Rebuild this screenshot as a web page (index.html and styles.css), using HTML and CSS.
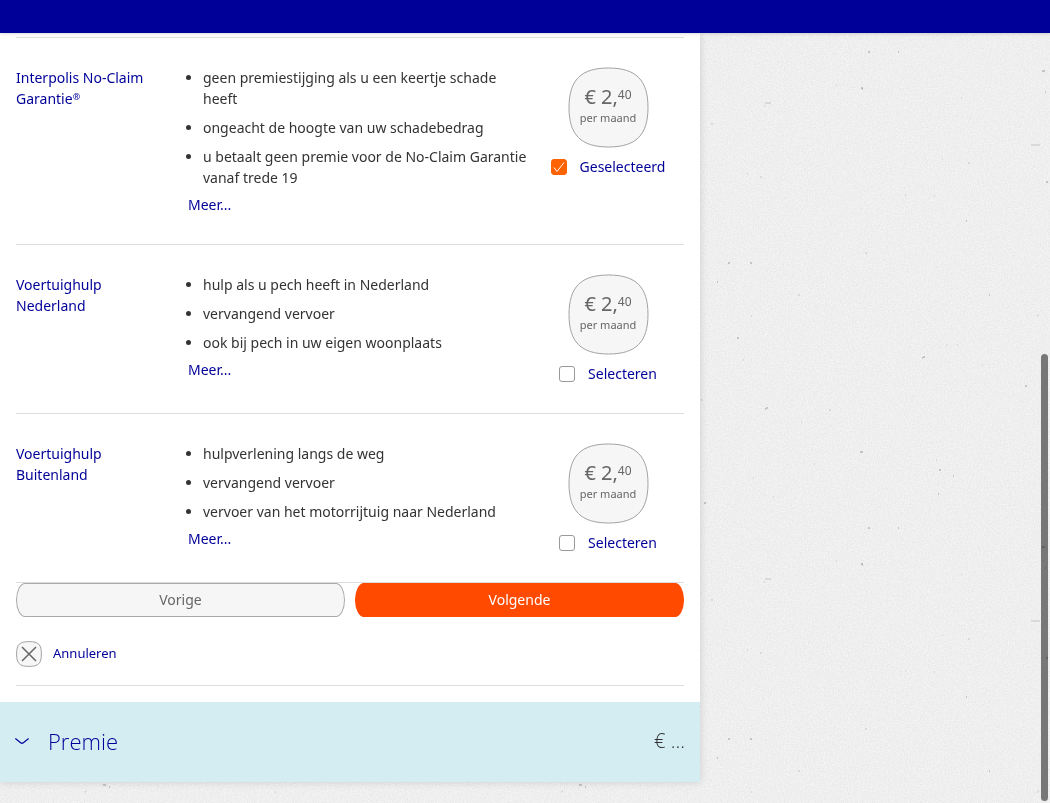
FILE: index.html
```html
<!DOCTYPE html>
<html lang="nl">
<head>
<meta charset="utf-8">
<title>Aanvullende dekkingen</title>
<link rel="stylesheet" href="styles.css">
</head>
<body>
<svg class="defs" aria-hidden="true">
  <symbol id="bubble" viewBox="0 0 81 81">
    <path d="M40.500 1C68 1 80 13 80 40.500S68 80 40.500 80 1 68 1 40.500 13 1 40.500 1Z"/>
  </symbol>
</svg>
<svg class="paper" aria-hidden="true">
  <defs>
    <filter id="grain" x="0" y="0" width="100%" height="100%" color-interpolation-filters="sRGB">
      <feTurbulence type="fractalNoise" baseFrequency="0.7" numOctaves="2" seed="4"/>
      <feColorMatrix values=".09 0 0 0 .891  .09 0 0 0 .891  .09 0 0 0 .891  0 0 0 0 1"/>
    </filter>
    <pattern id="specks" x="700" y="33" width="476" height="476" patternUnits="userSpaceOnUse">
      <path class="speck-dark" d="M168 19h2M198 19h1M161 55h2M162 56h1M342 38h3M345 59h1M346 149h2M266 188h1M223 324h2M222 325h1M325 353h2M1 367h1M66 375h2M65 376h1M160 419h3M239 437h2M253 443h1M238 461h1M4 470h2M28 230h2M50 230h2M17 249h1M37 305h2M289 262h1M355 276h3M361 278h1"/>
      <path class="speck-light" d="M65 70h6M64 73h1M136 52h1M261 65h1M11 91h2M331 112h9M242 126h1M268 130h2M47 141h1M60 144h2M205 162h1M234 163h1M165 220h2M51 283h1M43 327h1M246 312h1M257 312h1M282 332h1M101 389h1M129 377h2M114 431h1M236 427h1M53 445h1M73 464h1M98 262h2M337 283h1M338 282h1"/>
    </pattern>
  </defs>
  <rect width="100%" height="100%" filter="url(#grain)"/>
  <rect width="100%" height="100%" fill="url(#specks)"/>
</svg>
<header class="topbar"></header>
<main class="panel">
  <form class="content">
    <section class="option">
      <h2 class="option-title">Interpolis No-Claim <span class="marked"><span>Garantie</span><span class="mark">®</span></span></h2>
      <div class="option-info">
        <ul class="benefits">
          <li>geen premiestijging als u een keertje schade heeft</li>
          <li>ongeacht de hoogte van uw schadebedrag</li>
          <li>u betaalt geen premie voor de No-Claim Garantie vanaf trede 19</li>
        </ul>
        <a class="more" href="#">Meer...</a>
      </div>
      <div class="option-choice">
        <div class="price">
          <svg class="price-shape" aria-hidden="true"><use href="#bubble"/></svg>
          <p class="price-text"><span class="amount">€ 2,<span class="cents">40</span></span><span class="period">per maand</span></p>
        </div>
        <label class="choice"><input class="check" type="checkbox" checked>Geselecteerd</label>
      </div>
    </section>
    <section class="option">
      <h2 class="option-title">Voertuighulp Nederland</h2>
      <div class="option-info">
        <ul class="benefits">
          <li>hulp als u pech heeft in Nederland</li>
          <li>vervangend vervoer</li>
          <li>ook bij pech in uw eigen woonplaats</li>
        </ul>
        <a class="more" href="#">Meer...</a>
      </div>
      <div class="option-choice">
        <div class="price">
          <svg class="price-shape" aria-hidden="true"><use href="#bubble"/></svg>
          <p class="price-text"><span class="amount">€ 2,<span class="cents">40</span></span><span class="period">per maand</span></p>
        </div>
        <label class="choice"><input class="check" type="checkbox">Selecteren</label>
      </div>
    </section>
    <section class="option">
      <h2 class="option-title">Voertuighulp Buitenland</h2>
      <div class="option-info">
        <ul class="benefits">
          <li>hulpverlening langs de weg</li>
          <li>vervangend vervoer</li>
          <li>vervoer van het motorrijtuig naar Nederland</li>
        </ul>
        <a class="more" href="#">Meer...</a>
      </div>
      <div class="option-choice">
        <div class="price">
          <svg class="price-shape" aria-hidden="true"><use href="#bubble"/></svg>
          <p class="price-text"><span class="amount">€ 2,<span class="cents">40</span></span><span class="period">per maand</span></p>
        </div>
        <label class="choice"><input class="check" type="checkbox">Selecteren</label>
      </div>
    </section>
    <div class="actions">
      <button class="btn btn-back" type="button">Vorige</button>
      <button class="btn btn-next" type="submit">Volgende</button>
    </div>
    <a class="cancel" href="#">
      <svg class="cancel-icon" viewBox="0 0 26 26" aria-hidden="true">
        <path class="cancel-shape" d="M13 .6C22.500 .6 25.400 3.500 25.400 13S22.500 25.400 13 25.400 .6 22.500 .6 13 3.500 .6 13 .6Z"/>
        <path class="cancel-cross" d="M6 6 20 20M20 6 6 20"/>
      </svg>
      <span class="cancel-label">Annuleren</span>
    </a>
  </form>
  <button class="premium" type="button">
    <svg class="chevron" viewBox="0 0 14 8" aria-hidden="true"><path d="M.3 1.500 5.700 5.800Q7 6.800 8.300 5.800L13.700 1.500"/></svg>
    <span class="premium-title">Premie</span>
    <span class="premium-amount">€ ...</span>
  </button>
</main>
<div class="scroll-thumb" aria-hidden="true"></div>
</body>
</html>
```

FILE: styles.css
```css
* {
  box-sizing: border-box;
}

body {
  margin: 0;
  min-height: 100vh;
  overflow-x: hidden;
  background: #eee;
  color: #333;
  font: 14px/21px "Noto Sans", "Open Sans", sans-serif;
}

h2, ul, p {
  margin: 0;
  padding: 0;
}

a {
  color: #009;
  text-decoration: none;
}

.defs {
  position: absolute;
  width: 0;
  height: 0;
}

.paper {
  position: fixed;
  inset: 0;
  z-index: -1;
  width: 100%;
  height: 100%;
}

.speck-dark, .speck-light {
  fill: none;
  stroke: #999;
  stroke-width: 1;
}

.speck-light {
  stroke: #c4c4c4;
}

.topbar {
  position: relative;
  height: 33px;
  background: #009;
  box-shadow: 0 1px 3px rgba(0, 0, 0, .15);
}

.panel {
  width: 66.6667%;
  padding-top: 4px;
  background: #fff;
  box-shadow: 0 0 8px rgba(0, 0, 0, .15);
}

.content {
  margin: 0 16px 16px;
  padding-bottom: 18px;
  border-bottom: 1px solid #ddd;
}

.option {
  display: grid;
  grid-template-columns: 172px 1fr 152px;
  padding: 29px 0;
  border-top: 1px solid #ddd;
}

.option-title {
  padding-right: 24px;
  color: #009;
  font-size: 14px;
  font-weight: 400;
}

.marked {
  display: inline-flex;
  vertical-align: top;
}

.mark {
  font-size: 9px;
  line-height: 18px;
}

.benefits {
  display: grid;
  gap: 8px;
  margin-bottom: 6px;
  padding-left: 15px;
}

.option-info {
  padding-right: 4px;
}

.more {
  display: block;
}

.option-choice {
  display: grid;
  justify-items: center;
  align-content: start;
  gap: 8px;
}

.price {
  display: grid;
  place-items: center;
}

.price-shape, .price-text {
  grid-area: 1 / 1;
}

.price-shape {
  width: 81px;
  height: 81px;
  fill: #f6f6f6;
  stroke: #a3a3a3;
}

.price-text {
  display: grid;
  justify-items: center;
  padding-bottom: 4px;
  color: #666;
}

.amount {
  display: flex;
  font-size: 20px;
  line-height: 24px;
}

.cents {
  font-size: 12px;
  line-height: 20px;
}

.period {
  font-size: 11px;
  line-height: 18px;
}

.choice {
  display: flex;
  align-items: center;
  gap: 13px;
  color: #009;
}

.check {
  appearance: none;
  width: 16px;
  height: 16px;
  margin: 0;
  border: 1px solid #999;
  border-radius: 3px;
  background: #fff;
}

.check:checked {
  border-color: #ff6200;
  background: #ff6200 url("data:image/svg+xml,%3Csvg xmlns='http://www.w3.org/2000/svg' viewBox='0 0 14 14'%3E%3Cpath d='M2 7.500 5 11.500 12 2.500' fill='none' stroke='white'/%3E%3C/svg%3E");
}

.actions {
  display: grid;
  grid-template-columns: 1fr 1fr;
  gap: 10px;
  border-top: 1px solid #ddd;
}

.btn {
  height: 34px;
  padding: 0 0 2px;
  border: 1px solid #aaa;
  border-radius: 9px / 17px;
  font: inherit;
}

.btn-back {
  background: #f6f6f6;
  color: #666;
}

.btn-next {
  border-color: #ff4a00;
  background: #ff4a00;
  color: #fff;
}

.cancel {
  display: inline-flex;
  align-items: center;
  gap: 11px;
  margin-top: 24px;
  font-size: 13px;
  vertical-align: top;
}

.cancel-label {
  padding-bottom: 2px;
}

.cancel-icon {
  width: 26px;
  height: 26px;
  fill: none;
}

.cancel-shape {
  fill: #f6f6f6;
  stroke: #a3a3a3;
}

.cancel-cross {
  stroke: #666;
  stroke-width: 1.5;
}

.premium {
  display: flex;
  align-items: center;
  width: 100%;
  height: 80px;
  padding: 0 15px 2px;
  border: 0;
  background: #d4edf3;
  color: #009;
  font: 300 22px/32px "Open Sans", "Noto Sans", sans-serif;
}

.chevron {
  width: 14px;
  height: 8px;
  margin-right: 19px;
  fill: none;
  stroke: #009;
  stroke-width: 1.2;
}

.premium-amount {
  margin-left: auto;
  color: #333;
  font-size: 20px;
}

.scroll-thumb {
  position: fixed;
  right: 2px;
  bottom: 2px;
  width: 7px;
  height: 447px;
  border-radius: 4px;
  background: rgba(0, 0, 0, .5);
}
```
